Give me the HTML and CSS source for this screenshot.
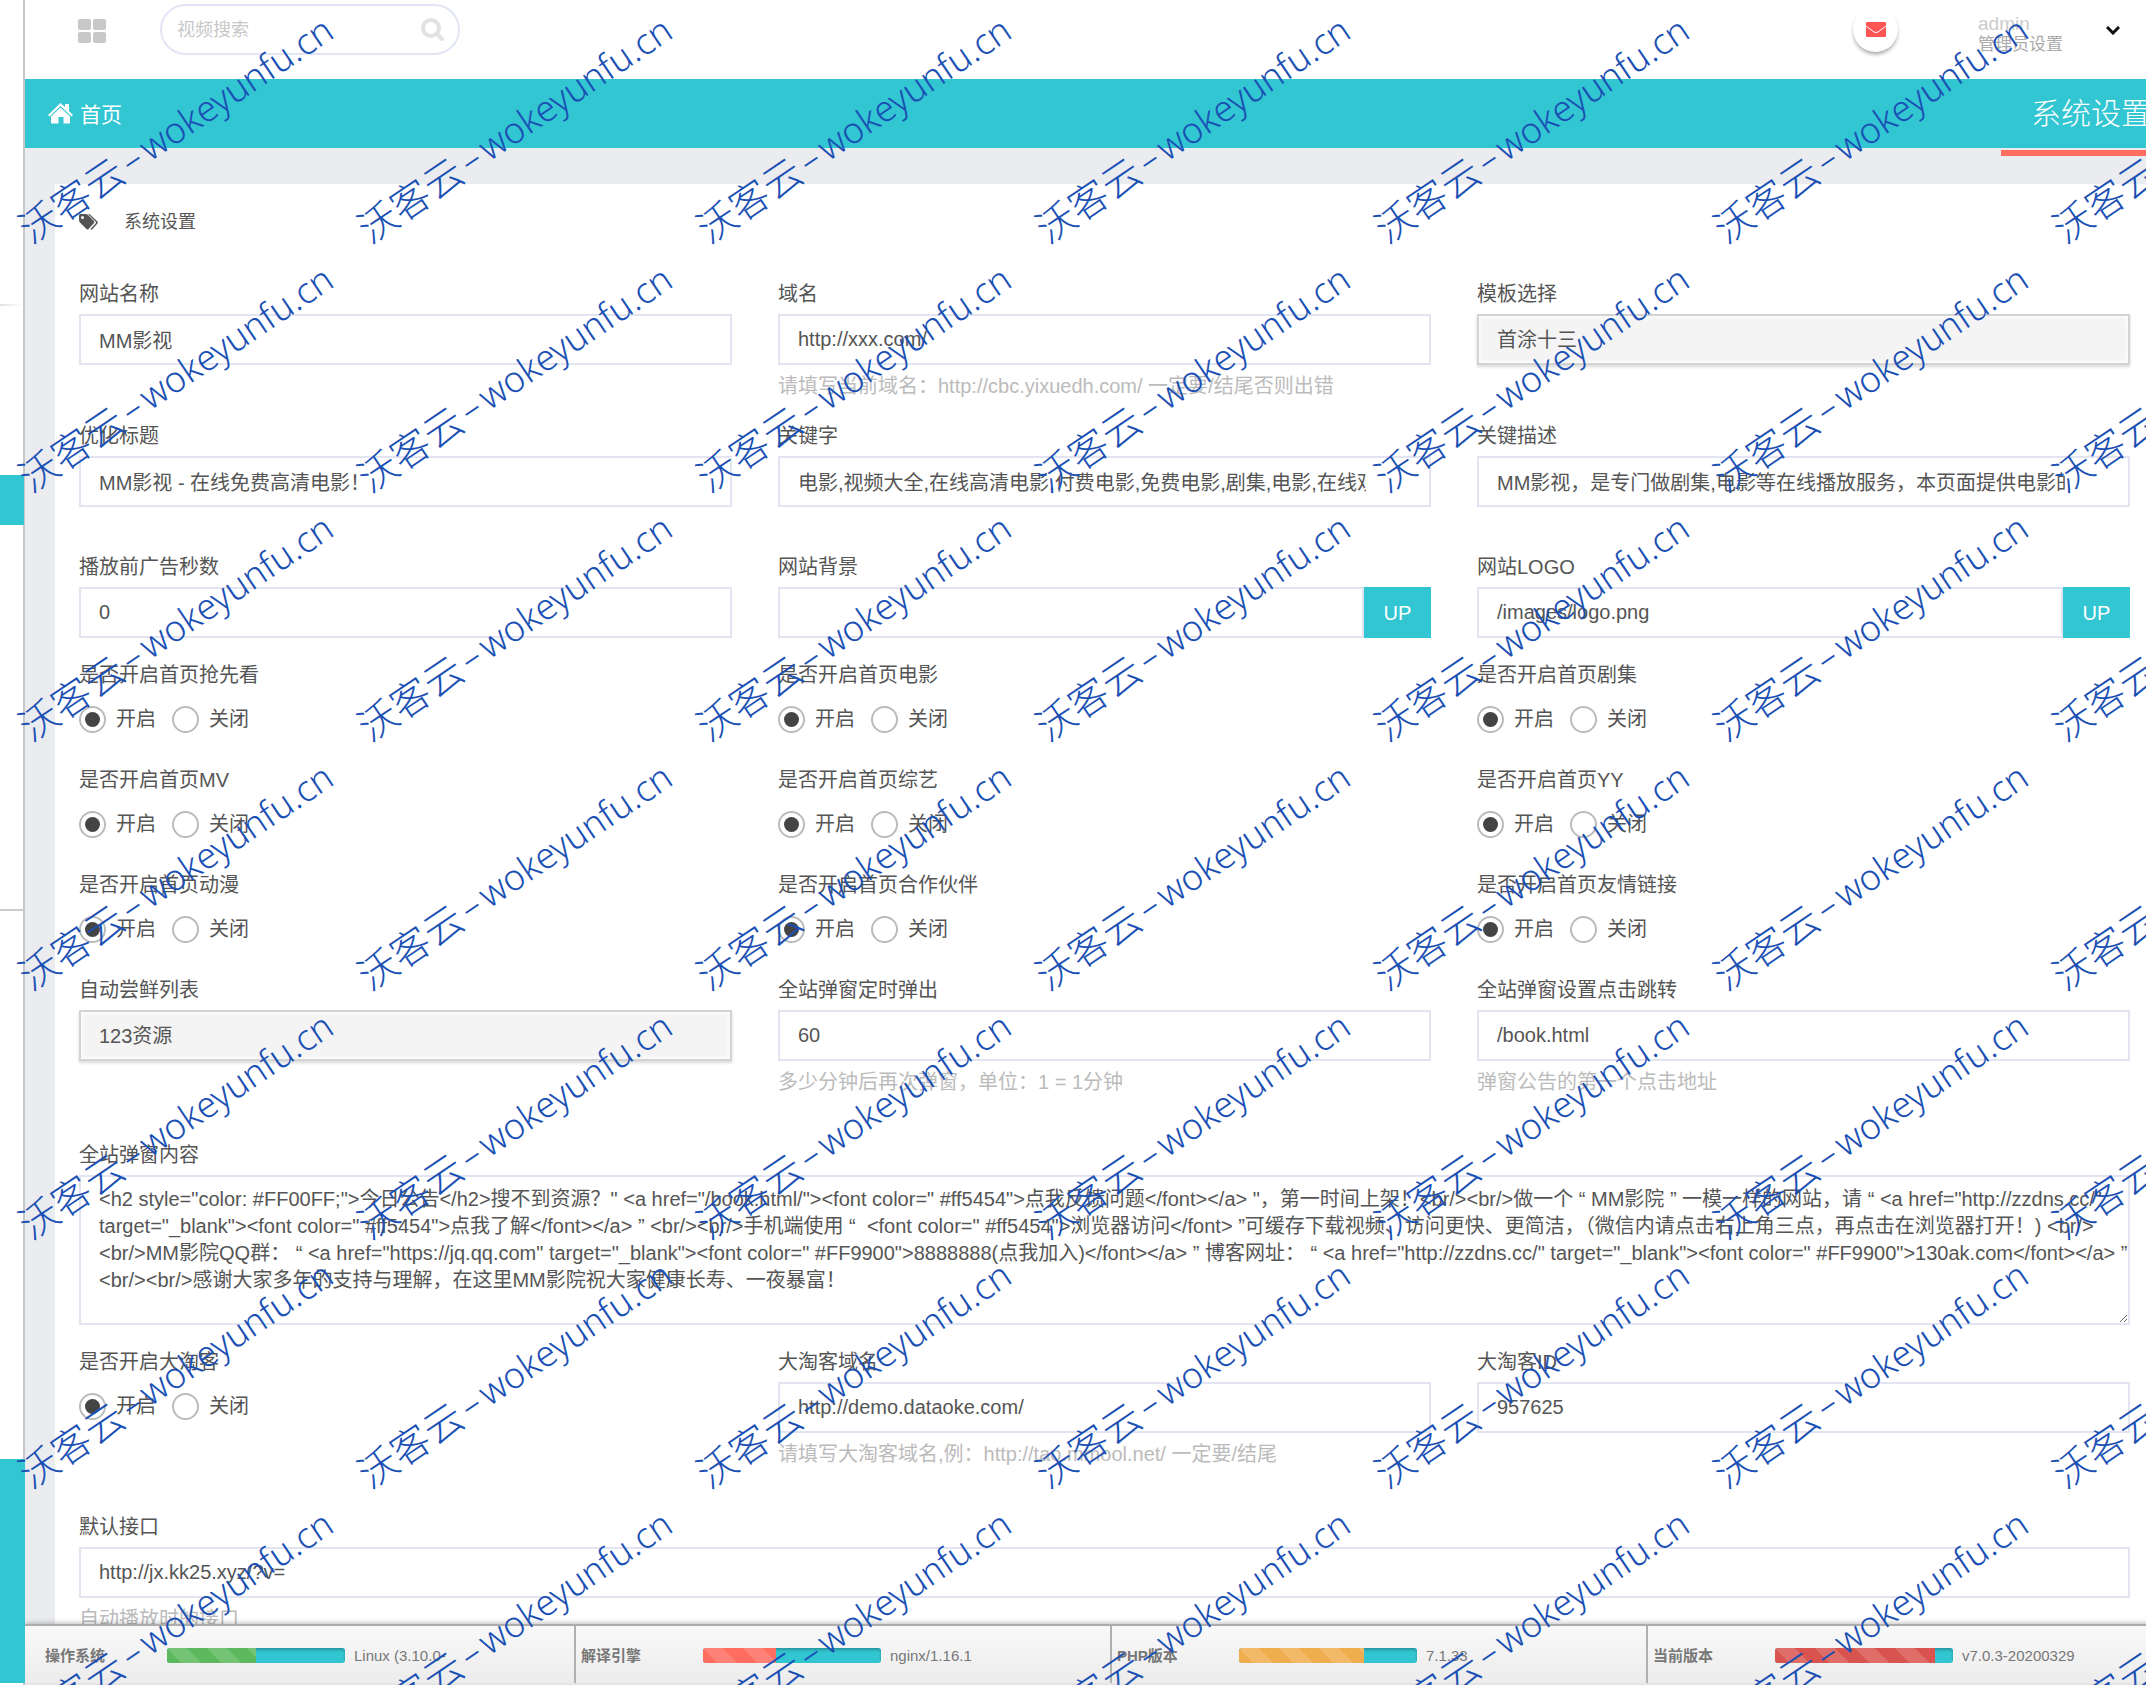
FILE: index.html
```html
<!DOCTYPE html>
<html lang="zh-CN">
<head>
<meta charset="utf-8">
<meta name="viewport" content="width=device-width, initial-scale=1">
<title>系统设置</title>
<link rel="stylesheet" href="styles.css">
</head>
<body>
<div class="app">
  <aside class="sidebar">
    <div class="side-rule side-rule-soft"></div>
    <div class="side-active"></div>
    <div class="side-rule"></div>
    <div class="side-block"></div>
  </aside>
  <main class="main">
    <header class="topbar">
      <button class="icon-btn menu-toggle" type="button" aria-label="菜单">
        <svg width="28" height="24" viewBox="0 0 28 24" fill="#c8c8c8"><rect width="13" height="11" rx="2"/><rect x="15" width="13" height="11" rx="2"/><rect y="13" width="13" height="11" rx="2"/><rect x="15" y="13" width="13" height="11" rx="2"/></svg>
      </button>
      <form class="search">
        <input class="search-input" type="text" placeholder="视频搜索" aria-label="视频搜索">
        <button class="icon-btn" type="button" aria-label="搜索">
          <svg width="24" height="24" viewBox="0 0 24 24" fill="none" stroke="#e2e2e2"><circle cx="10" cy="10" r="8" stroke-width="4"/><path d="M16 16l5 5" stroke-width="4" stroke-linecap="round"/></svg>
        </button>
      </form>
      <a class="mail" href="#" aria-label="邮件">
        <svg width="20" height="15" viewBox="0 0 20 15"><rect width="20" height="15" rx="1" fill="#ff5454"/><path d="M0 4l8 6q2 1 4 0l8-6" fill="none" stroke="#fff" stroke-width="1"/></svg>
      </a>
      <a class="account" href="#">
        <span class="account-name">admin</span>
        <span class="account-role">管理员设置</span>
      </a>
      <svg class="chevron" width="14" height="9" viewBox="0 0 14 9" fill="none" stroke="#111" stroke-width="3"><path d="M1 1l6 6 6-6"/></svg>
    </header>
    <nav class="crumbs">
      <a class="home" href="#">
        <svg width="25" height="21" viewBox="0 0 25 21" fill="#fff"><path d="M12.500 0L17 4V1h4v7l4 4-1.500 1.500-11-10.500-11 10.500L0 12z"/><path d="M12.500 4.500L22 13.500v6q0 1-1 1h-5.500V14h-5v6.500H4q-1 0-1-1v-6z"/></svg>
        <span>首页</span>
      </a>
      <div class="page-title">系统设置</div>
    </nav>
    <div class="content">
      <section class="panel">
        <h1 class="panel-title">
          <svg width="19" height="16" viewBox="0 0 19 16" fill="#555"><path fill-rule="evenodd" d="M0 1.500Q0 0 1.500 0h5Q8 0 9 1l6 6q1 1 0 2l-5.500 6q-1 1-2 0L1 8.500Q0 7.500 0 6zM3.500 2a1.500 1.500 0 1 0 0 3 1.500 1.500 0 0 0 0-3z"/><path d="M9 0h1.500L18 7q1.500 1.500 0 3l-5 5.500q-1 .5-1.500-.5l5-5.500q1-1 0-2z"/></svg>
          系统设置
        </h1>
        <form class="settings">
          <div class="row">
            <div class="field"><label for="site">网站名称</label><input id="site" class="control" type="text" value="MM影视"></div>
            <div class="field"><label for="domain">域名</label><input id="domain" class="control" type="text" value="http://xxx.com/"><p class="help">请填写当前域名：http://cbc.yixuedh.com/ 一定要/结尾否则出错</p></div>
            <div class="field"><label for="tpl">模板选择</label><select id="tpl" class="control"><option>首涂十三</option></select></div>
          </div>
          <div class="row row-loose">
            <div class="field"><label for="title">优化标题</label><input id="title" class="control" type="text" value="MM影视 - 在线免费高清电影！"></div>
            <div class="field"><label for="kw">关键字</label><input id="kw" class="control" type="text" value="电影,视频大全,在线高清电影,付费电影,免费电影,剧集,电影,在线观"></div>
            <div class="field"><label for="desc">关键描述</label><input id="desc" class="control" type="text" value="MM影视，是专门做剧集,电影等在线播放服务，本页面提供电影的"></div>
          </div>
          <div class="row">
            <div class="field"><label for="ad">播放前广告秒数</label><input id="ad" class="control" type="text" value="0"></div>
            <div class="field"><label for="bg">网站背景</label><div class="upload"><input id="bg" class="control" type="text"><button class="up" type="button">UP</button></div></div>
            <div class="field"><label for="logo">网站LOGO</label><div class="upload"><input id="logo" class="control" type="text" value="/images/logo.png"><button class="up" type="button">UP</button></div></div>
          </div>
          <div class="row">
            <fieldset class="field"><legend>是否开启首页抢先看</legend><div class="radios"><label class="opt"><input type="radio" name="r1" checked>开启</label><label class="opt"><input type="radio" name="r1">关闭</label></div></fieldset>
            <fieldset class="field"><legend>是否开启首页电影</legend><div class="radios"><label class="opt"><input type="radio" name="r2" checked>开启</label><label class="opt"><input type="radio" name="r2">关闭</label></div></fieldset>
            <fieldset class="field"><legend>是否开启首页剧集</legend><div class="radios"><label class="opt"><input type="radio" name="r3" checked>开启</label><label class="opt"><input type="radio" name="r3">关闭</label></div></fieldset>
          </div>
          <div class="row">
            <fieldset class="field"><legend>是否开启首页MV</legend><div class="radios"><label class="opt"><input type="radio" name="r4" checked>开启</label><label class="opt"><input type="radio" name="r4">关闭</label></div></fieldset>
            <fieldset class="field"><legend>是否开启首页综艺</legend><div class="radios"><label class="opt"><input type="radio" name="r5" checked>开启</label><label class="opt"><input type="radio" name="r5">关闭</label></div></fieldset>
            <fieldset class="field"><legend>是否开启首页YY</legend><div class="radios"><label class="opt"><input type="radio" name="r6" checked>开启</label><label class="opt"><input type="radio" name="r6">关闭</label></div></fieldset>
          </div>
          <div class="row">
            <fieldset class="field"><legend>是否开启首页动漫</legend><div class="radios"><label class="opt"><input type="radio" name="r7" checked>开启</label><label class="opt"><input type="radio" name="r7">关闭</label></div></fieldset>
            <fieldset class="field"><legend>是否开启首页合作伙伴</legend><div class="radios"><label class="opt"><input type="radio" name="r8" checked>开启</label><label class="opt"><input type="radio" name="r8">关闭</label></div></fieldset>
            <fieldset class="field"><legend>是否开启首页友情链接</legend><div class="radios"><label class="opt"><input type="radio" name="r9" checked>开启</label><label class="opt"><input type="radio" name="r9">关闭</label></div></fieldset>
          </div>
          <div class="row row-loose">
            <div class="field"><label for="fresh">自动尝鲜列表</label><select id="fresh" class="control"><option>123资源</option></select></div>
            <div class="field"><label for="timer">全站弹窗定时弹出</label><input id="timer" class="control" type="text" value="60"><p class="help">多少分钟后再次弹窗，单位：1 = 1分钟</p></div>
            <div class="field"><label for="jump">全站弹窗设置点击跳转</label><input id="jump" class="control" type="text" value="/book.html"><p class="help">弹窗公告的第一个点击地址</p></div>
          </div>
          <div class="row row-single">
            <div class="field"><label for="popup">全站弹窗内容</label>
<textarea id="popup" class="control popup" spellcheck="false">&lt;h2 style="color: #FF00FF;"&gt;今日公告&lt;/h2&gt;搜不到资源？" &lt;a href="/book.html/"&gt;&lt;font color=" #ff5454"&gt;点我反馈问题&lt;/font&gt;&lt;/a&gt; "，第一时间上架！&lt;br/&gt;&lt;br/&gt;做一个 “ MM影院 ” 一模一样的网站，请 “ &lt;a href="http://zzdns.cc/"
target="_blank"&gt;&lt;font color=" #ff5454"&gt;点我了解&lt;/font&gt;&lt;/a&gt; ” &lt;br/&gt;&lt;br/&gt;手机端使用 “  &lt;font color=" #ff5454"&gt;浏览器访问&lt;/font&gt; ”可缓存下载视频、访问更快、更简洁，（微信内请点击右上角三点，再点击在浏览器打开！) &lt;br/&gt;
&lt;br/&gt;MM影院QQ群： “ &lt;a href="https://jq.qq.com" target="_blank"&gt;&lt;font color=" #FF9900"&gt;8888888(点我加入)&lt;/font&gt;&lt;/a&gt; ” 博客网址： “ &lt;a href="http://zzdns.cc/" target="_blank"&gt;&lt;font color=" #FF9900"&gt;130ak.com&lt;/font&gt;&lt;/a&gt; ”
&lt;br/&gt;&lt;br/&gt;感谢大家多年的支持与理解，在这里MM影院祝大家健康长寿、一夜暴富！</textarea></div>
          </div>
          <div class="row row-loose">
            <fieldset class="field"><legend>是否开启大淘客</legend><div class="radios"><label class="opt"><input type="radio" name="r10" checked>开启</label><label class="opt"><input type="radio" name="r10">关闭</label></div></fieldset>
            <div class="field"><label for="tkd">大淘客域名</label><input id="tkd" class="control" type="text" value="http://demo.dataoke.com/"><p class="help">请填写大淘客域名,例：http://tao.mmool.net/ 一定要/结尾</p></div>
            <div class="field"><label for="tkid">大淘客ID</label><input id="tkid" class="control" type="text" value="957625"></div>
          </div>
          <div class="row row-single">
            <div class="field"><label for="api">默认接口</label><input id="api" class="control" type="text" value="http://jx.kk25.xyz/?v="><p class="help">自动播放时的接口</p></div>
          </div>
        </form>
      </section>
    </div>
    <footer class="status">
      <div class="stat"><strong>操作系统</strong><div class="meter"><div class="fill fill-green" style="width:50%"></div></div><span>Linux (3.10.0-</span></div>
      <div class="stat"><strong>解译引擎</strong><div class="meter"><div class="fill fill-coral" style="width:41%"></div></div><span>nginx/1.16.1</span></div>
      <div class="stat"><strong>PHP版本</strong><div class="meter"><div class="fill fill-amber" style="width:70%"></div></div><span>7.1.33</span></div>
      <div class="stat"><strong>当前版本</strong><div class="meter"><div class="fill fill-red" style="width:90%"></div></div><span>v7.0.3-20200329</span></div>
    </footer>
  </main>
  <div class="watermark" aria-hidden="true"></div>
</div>
<script src="watermark.js"></script>
</body>
</html>
```
FILE: watermark.js
```js
// Tiles the watermark text over the whole window.
const layer = document.querySelector('.watermark');
const columns = Math.ceil(window.innerWidth / 339);
const rows = Math.ceil(window.innerHeight / 249);
layer.style.gridTemplateColumns = `repeat(${columns}, 339px)`;
for (let i = 0; i < columns * rows; i++) {
  const cell = document.createElement('div');
  cell.className = 'mark';
  cell.innerHTML = '<span class="mark-name">沃客云</span><span>–</span><span>wokeyunfu.cn</span>';
  layer.append(cell);
}
```
FILE: styles.css
```css
* { box-sizing: border-box; }
body {
  margin: 0;
  color: #555;
  background: #ebecf0;
  font: 20px/30px "Liberation Sans", "Noto Sans CJK SC", sans-serif;
}
input, select, textarea, button { font: inherit; color: inherit; }
a { color: inherit; text-decoration: none; }

.app {
  position: relative;
  display: grid;
  grid-template-columns: 25px minmax(0, 1fr);
  height: 100vh;
  overflow: hidden;
}

/* Sidebar edge */
.sidebar {
  display: flex;
  flex-direction: column;
  padding-top: 304px;
  background: #fff;
  border-right: 2px solid #c6c8c8;
}
.side-rule { height: 2px; background: #ccc; }
.side-rule-soft { background: linear-gradient(90deg, #e2e2e2, #fff); }
.side-active { height: 50px; margin: 169px -1px 384px 0; background: #32c5d2; }
.side-block { flex: 1; margin: 548px -2px 2px 0; background: #32c5d2; }

.main {
  display: flex;
  flex-direction: column;
  min-height: 0;
  overflow: hidden;
}

/* Top bar */
.topbar {
  display: flex;
  flex: none;
  align-items: flex-start;
  height: 79px;
  padding: 4px 26px 0 53px;
  background: #fff;
}
.icon-btn { display: flex; padding: 0; border: 0; background: none; }
.menu-toggle { margin: 15px 54px 0 0; }
.search {
  display: flex;
  align-items: center;
  width: 300px;
  height: 51px;
  padding: 0 13px 0 15px;
  border: 2px solid #e2e5f5;
  border-radius: 26px;
}
.search-input {
  flex: 1;
  min-width: 0;
  padding: 0;
  border: 0;
  outline: 0;
  background: none;
  font-size: 18px;
}
.search-input::placeholder { color: #c8c8c8; opacity: 1; }
.mail {
  display: flex;
  align-items: center;
  justify-content: center;
  width: 45px;
  height: 45px;
  margin: 3px 80px 0 auto;
  border-radius: 50%;
  background: #fff;
  box-shadow: 0 3px 4px -1px rgba(0, 0, 0, .4);
}
.account { display: flex; flex-direction: column; width: 128px; padding-top: 9px; }
.account-name { color: #ccc; font-size: 19px; line-height: 22px; }
.account-role { color: #aaa; font-size: 17px; line-height: 20px; }
.chevron { margin-top: 22px; }

/* Breadcrumb strip */
.crumbs {
  display: flex;
  flex: none;
  align-items: center;
  justify-content: space-between;
  height: 69px;
  padding-left: 23px;
  background: #32c5d2;
  color: #fff;
}
.home { display: flex; align-items: center; gap: 7px; font-size: 21px; }
.home span { padding-top: 3px; }
.page-title {
  position: relative;
  margin-right: -35px;
  padding: 0 30px;
  font-size: 30px;
  font-weight: 300;
  line-height: 69px;
  white-space: nowrap;
}
.page-title::after {
  content: "";
  position: absolute;
  top: 71px;
  left: 0;
  right: 0;
  height: 6px;
  background: #ff6c60;
}

/* Settings panel */
.content {
  flex: 1;
  min-height: 0;
  padding: 36px 0 0 30px;
  overflow-x: hidden;
  overflow-y: auto;
  scrollbar-width: none;
}
.panel { padding: 23px 16px 20px 24px; background: #fff; }
.panel-title {
  display: flex;
  align-items: center;
  gap: 26px;
  margin: 0 0 41px;
  font-size: 18px;
  font-weight: 400;
}
.row {
  display: grid;
  grid-template-columns: repeat(3, minmax(0, 1fr));
  gap: 46px;
  margin-bottom: 21px;
}
.row-loose { margin-bottom: 44px; }
.row-single { grid-template-columns: minmax(0, 1fr); }
.field { min-width: 0; margin: 0; padding: 0; border: 0; }
.field > label, .field > legend { display: block; height: 32px; margin-bottom: 4px; padding: 0; line-height: 32px; }
.control {
  display: block;
  width: 100%;
  height: 51px;
  padding: 0 63px 0 18px;
  border: 2px solid #e2e5f1;
  border-radius: 0;
  outline: 0;
  background: #fff;
}
select.control {
  appearance: none;
  border-color: #d3d3d3;
  background: #f4f4f4;
  box-shadow: inset 0 0 4px 1px #fff, 0 2px 3px rgba(0, 0, 0, .15);
}
.popup {
  height: 150px;
  padding: 9px 0 8px 18px;
  line-height: 27px;
  white-space: pre;
  overflow: hidden;
  resize: vertical;
}
.upload { display: flex; }
.up { flex: none; width: 67px; border: 0; background: #32c5d2; color: #fff; }
.help { height: 28px; margin: 6px 0 0; color: #bbb; }

.radios { display: flex; gap: 16px; height: 48px; }
.opt { display: flex; align-items: center; gap: 10px; }
.opt input {
  display: flex;
  align-items: center;
  justify-content: center;
  appearance: none;
  width: 27px;
  height: 27px;
  margin: 0;
  border: 2px solid #bbb;
  border-radius: 50%;
  background: #fff;
}
.opt input:checked::before {
  content: "";
  width: 15px;
  height: 15px;
  border-radius: 50%;
  background: #444;
}

/* Status bar */
.status {
  display: grid;
  flex: none;
  grid-template-columns: repeat(4, minmax(0, 1fr));
  height: 61px;
  padding-left: 13px;
  margin-right: -36px;
  border-top: 2px solid #adadad;
  border-bottom: 2px solid #e4e4e4;
  background: linear-gradient(#f9f9f9, #ececec);
  box-shadow: 0 -1px 5px rgba(0, 0, 0, .25);
  color: #777;
  font-size: 15px;
  z-index: 1;
}
.stat { display: flex; align-items: center; padding: 2px 0 0 7px; }
.stat + .stat { border-left: 2px solid #b0b0b0; padding-left: 5px; }
.stat strong { width: 122px; font-weight: 700; }
.meter {
  width: 178px;
  height: 15px;
  margin-right: 9px;
  overflow: hidden;
  border-radius: 3px;
  background: #32c5d2;
  box-shadow: inset 0 2px 3px rgba(0, 0, 0, .25);
}
.fill {
  height: 100%;
  background-image: linear-gradient(45deg, rgba(255,255,255,.15) 25%, transparent 25%, transparent 50%, rgba(255,255,255,.15) 50%, rgba(255,255,255,.15) 75%, transparent 75%);
  background-size: 40px 40px;
}
.fill-green { background-color: #5cb85c; }
.fill-coral { background-color: #ff6c60; }
.fill-amber { background-color: #f0ad4e; }
.fill-red { background-color: #d9534f; }

/* Watermark layer over the page */
.watermark {
  position: absolute;
  inset: 4px 0 0 6px;
  display: grid;
  grid-auto-rows: 249px;
  overflow: hidden;
  color: #1a50b4;
  font: 36px/40px "Noto Sans", "Noto Sans CJK SC", sans-serif;
  font-weight: 300;
  white-space: nowrap;
  pointer-events: none;
  z-index: 2;
}
.mark {
  display: flex;
  align-items: center;
  place-self: center;
  gap: 5px;
  transform: rotate(-34deg);
}
.mark-name { font-size: 39px; }
```
